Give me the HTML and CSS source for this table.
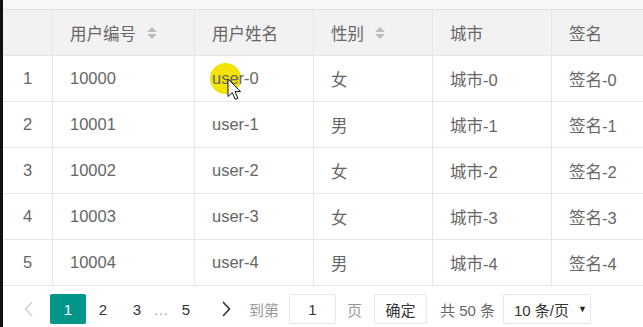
FILE: index.html
```html
<!DOCTYPE html>
<html lang="zh">
<head>
<meta charset="utf-8">
<title>表格</title>
<link rel="stylesheet" href="styles.css">
</head>
<body>
<div class="screen">
  <div class="edge"></div>
  <div class="main">
    <div class="topbar"></div>
    <div class="grid">
      <div class="cell head num"></div>
      <div class="cell head">用户编号<span class="sort"><i class="up"></i><i class="down"></i></span></div>
      <div class="cell head">用户姓名</div>
      <div class="cell head">性别<span class="sort"><i class="up"></i><i class="down"></i></span></div>
      <div class="cell head">城市</div>
      <div class="cell head last">签名</div>

      <div class="cell num">1</div>
      <div class="cell">10000</div>
      <div class="cell hot"><span class="spot"></span><span class="txt">user-0</span><svg class="pointer" width="16" height="24" viewBox="0 0 16 24"><path d="M1 1 L1 18.5 L5.3 14.6 L8.2 21.4 L10.9 20.2 L8 13.6 L13.6 13.6 Z" fill="#fff" stroke="#111" stroke-width="1" stroke-linejoin="round"/></svg></div>
      <div class="cell">女</div>
      <div class="cell">城市-0</div>
      <div class="cell last">签名-0</div>

      <div class="cell num">2</div>
      <div class="cell">10001</div>
      <div class="cell">user-1</div>
      <div class="cell">男</div>
      <div class="cell">城市-1</div>
      <div class="cell last">签名-1</div>

      <div class="cell num">3</div>
      <div class="cell">10002</div>
      <div class="cell">user-2</div>
      <div class="cell">女</div>
      <div class="cell">城市-2</div>
      <div class="cell last">签名-2</div>

      <div class="cell num">4</div>
      <div class="cell">10003</div>
      <div class="cell">user-3</div>
      <div class="cell">女</div>
      <div class="cell">城市-3</div>
      <div class="cell last">签名-3</div>

      <div class="cell num">5</div>
      <div class="cell">10004</div>
      <div class="cell">user-4</div>
      <div class="cell">男</div>
      <div class="cell">城市-4</div>
      <div class="cell last">签名-4</div>
    </div>
    <div class="pager">
      <span class="pg prev">
        <svg width="9" height="16" viewBox="0 0 9 16"><path d="M8 1 L1.5 8 L8 15" fill="none" stroke="#d2d2d2" stroke-width="1.6"/></svg>
      </span>
      <span class="pg cur">1</span>
      <span class="pg w34">2</span>
      <span class="pg w34">3</span>
      <span class="pg dots">…</span>
      <span class="pg">5</span>
      <span class="pg next">
        <svg width="9" height="16" viewBox="0 0 9 16"><path d="M1 1 L7.5 8 L1 15" fill="none" stroke="#333" stroke-width="1.6"/></svg>
      </span>
      <span class="lbl goto">到第</span>
      <span class="box inp">1</span>
      <span class="lbl page">页</span>
      <span class="box btn">确定</span>
      <span class="count">共 50 条</span>
      <span class="box sel">10 条/页<span class="caret">▼</span></span>
    </div>
  </div>
</div>
</body>
</html>
```

FILE: styles.css
```css
html, body {
  margin: 0;
  padding: 0;
  background: #fff;
}

body {
  font-family: "Liberation Sans", "Noto Sans CJK SC", sans-serif;
  color: #666;
  overflow: hidden;
}

.screen {
  position: relative;
  display: flex;
  width: 643px;
  height: 327px;
  overflow: hidden;
}

.edge {
  width: 3px;
  flex: 0 0 3px;
  background: #111;
}

.main {
  flex: 1 1 auto;
  overflow: hidden;
}

.topbar {
  height: 9px;
  background: #f7f7f7;
  border-bottom: 1px solid #e6e6e6;
}

.grid {
  display: grid;
  grid-template-columns: 50px 142px 119px 119px 119px 220px;
  grid-auto-rows: 46px;
  font-size: 16.5px;
}

.cell {
  box-sizing: border-box;
  display: flex;
  align-items: center;
  padding-left: 17px;
  border-right: 1px solid #e6e6e6;
  border-bottom: 1px solid #e6e6e6;
  white-space: nowrap;
  color: #666;
}

.cell.head {
  background: #f2f2f2;
}

.cell.num {
  justify-content: center;
  padding-left: 0;
}

.cell.last {
  border-right: none;
}

.sort {
  display: inline-flex;
  flex-direction: column;
  gap: 2px;
  margin-left: 11px;
}

.sort i {
  display: block;
  width: 0;
  height: 0;
  border-left: 5px solid transparent;
  border-right: 5px solid transparent;
}

.sort .up {
  border-bottom: 5px solid #bcbcbc;
}

.sort .down {
  border-top: 5px solid #bcbcbc;
}

.hot {
  position: relative;
}

.spot {
  position: absolute;
  left: 15px;
  top: 7px;
  width: 31px;
  height: 31px;
  border-radius: 50%;
  background: #f3e300;
}

.txt {
  position: relative;
}

.pointer {
  position: absolute;
  left: 32px;
  top: 22px;
}

.pager {
  display: flex;
  align-items: center;
  height: 30px;
  margin-top: 8px;
  padding-left: 7px;
  font-size: 15px;
  color: #333;
  white-space: nowrap;
}

.pager > span {
  flex: 0 0 auto;
}

.pg {
  display: flex;
  align-items: center;
  justify-content: center;
  width: 36px;
  height: 30px;
  color: #333;
}

.pg.prev {
  margin-right: 4px;
}

.pg.cur {
  background: #009688;
  color: #fff;
  border-radius: 2px;
}

.pg.w34 {
  width: 34px;
}

.pg.dots {
  width: 14px;
  color: #999;
}

.pg.next {
  width: 44px;
}

.lbl {
  color: #999;
}

.goto {
  width: 40px;
  margin-left: 1px;
}

.page {
  width: 27px;
  margin-left: 11px;
}

.box {
  box-sizing: border-box;
  display: flex;
  align-items: center;
  height: 30px;
  border: 1px solid #e6e6e6;
  border-radius: 2px;
  background: #fff;
  color: #333;
}

.inp {
  width: 47px;
  justify-content: center;
}

.btn {
  width: 53px;
  justify-content: center;
}

.count {
  width: 76px;
  padding-left: 13px;
  box-sizing: border-box;
  color: #666;
}

.sel {
  width: 88px;
  padding-left: 10px;
}

.caret {
  margin-left: 9px;
  font-size: 9px;
  color: #222;
}
```
